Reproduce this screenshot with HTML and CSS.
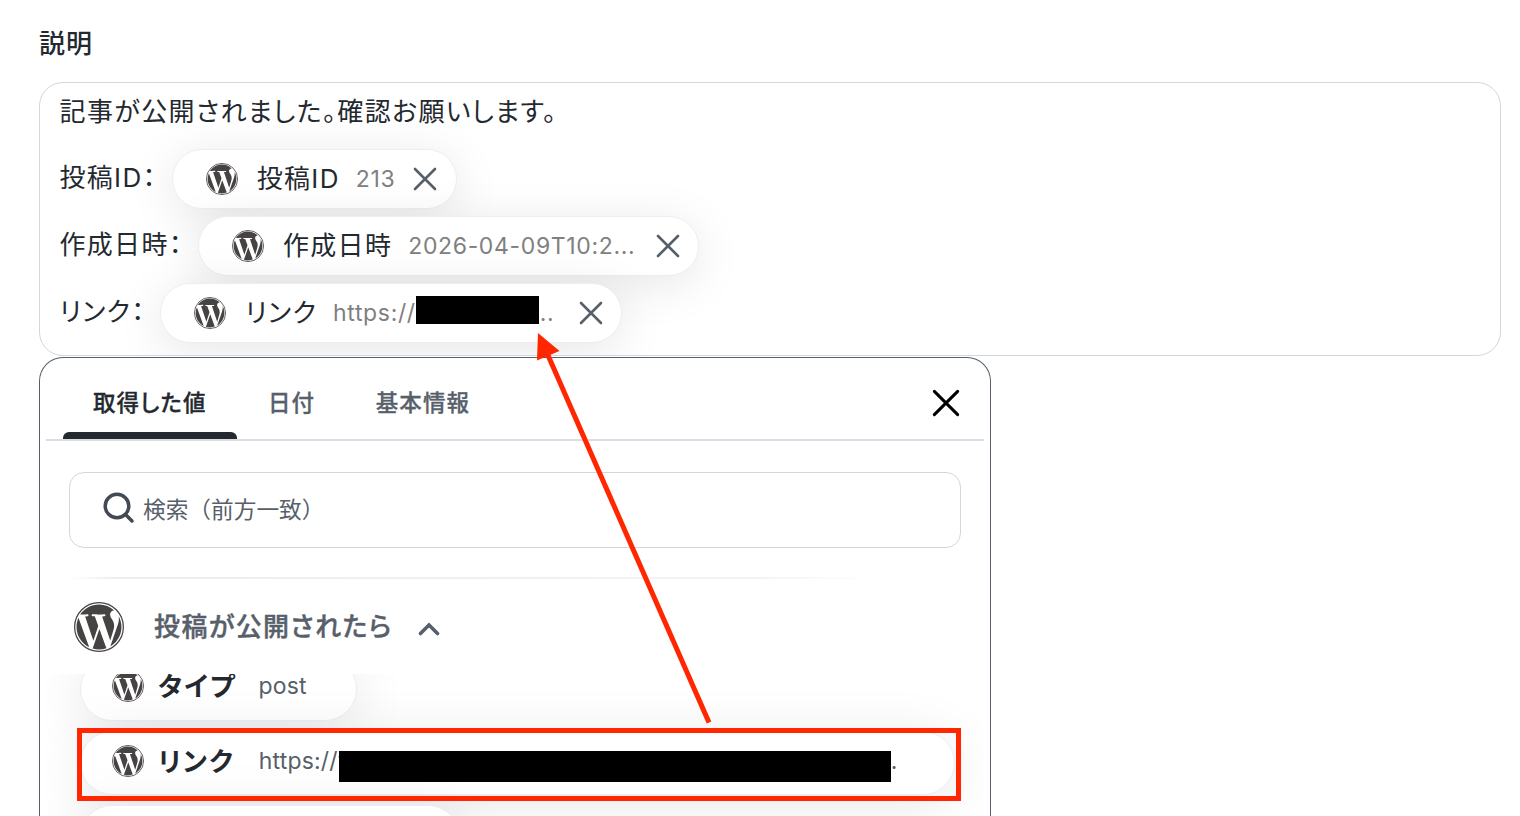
FILE: index.html
```html
<!DOCTYPE html>
<html lang="ja">
<head>
    <meta charset="UTF-8">
    <meta name="viewport" content="width=device-width, initial-scale=1.0">
    <title>説明</title>
    <link rel="stylesheet" href="styles.css">
</head>
<body>
    <svg class="sprite" width="0" height="0">
        <symbol id="wp" viewBox="0 0 24 24">
            <circle cx="12" cy="12" r="11.7" fill="#fff" stroke="#464342" stroke-width=".6"/>
            <path fill="#464342" d="M21.469 6.825c.84 1.537 1.318 3.3 1.318 5.175 0 3.979-2.156 7.456-5.363 9.325l3.295-9.527c.615-1.54.82-2.771.82-3.864 0-.405-.026-.78-.07-1.11m-7.981.105c.647-.03 1.232-.105 1.232-.105.582-.075.514-.93-.067-.899 0 0-1.755.135-2.88.135-1.064 0-2.85-.15-2.85-.15-.585-.03-.661.855-.075.885 0 0 .54.061 1.125.09l1.68 4.605-2.37 7.08L5.354 6.9c.649-.03 1.234-.1 1.234-.1.585-.075.516-.93-.065-.896 0 0-1.746.138-2.874.138-.2 0-.438-.008-.69-.015C4.911 3.15 8.235 1.215 12 1.215c2.809 0 5.365 1.072 7.286 2.833-.046-.003-.091-.009-.141-.009-1.06 0-1.812.923-1.812 1.914 0 .89.513 1.643 1.06 2.531.411.72.89 1.643.89 2.977 0 .915-.354 1.994-.821 3.479l-1.075 3.585-3.9-11.61zM12 22.784c-1.059 0-2.081-.153-3.048-.437l3.237-9.406 3.315 9.087c.024.053.05.101.078.149-1.12.393-2.325.609-3.582.609M1.211 12c0-1.564.336-3.05.935-4.39L7.29 21.709C3.694 19.96 1.212 16.271 1.211 12"/>
        </symbol>
        <symbol id="close" viewBox="0 0 24 24">
            <path d="M2 2l20 20M22 2L2 22" fill="none" stroke="currentColor" stroke-width="2.6" stroke-linecap="round"/>
        </symbol>
    </svg>

    <h1 class="field-label">説明</h1>

    <div class="editor">
        <p class="line line-first">記事が公開されました。確認お願いします。</p>
        <div class="line">
            <span class="line-label">投稿ID：</span>
            <span class="chip chip-id">
                <svg class="chip-icon"><use href="#wp"/></svg>
                <span class="chip-name">投稿ID</span>
                <span class="chip-value">213</span>
                <svg class="chip-close"><use href="#close"/></svg>
            </span>
        </div>
        <div class="line">
            <span class="line-label">作成日時：</span>
            <span class="chip chip-date">
                <svg class="chip-icon"><use href="#wp"/></svg>
                <span class="chip-name">作成日時</span>
                <span class="chip-value">2026-04-09T10:2...</span>
                <svg class="chip-close"><use href="#close"/></svg>
            </span>
        </div>
        <div class="line">
            <span class="line-label">リンク：</span>
            <span class="chip chip-link">
                <svg class="chip-icon"><use href="#wp"/></svg>
                <span class="chip-name">リンク</span>
                <span class="chip-value">https://</span>
                <span class="mask"></span>
                <span class="chip-value chip-rest">..</span>
                <svg class="chip-close"><use href="#close"/></svg>
            </span>
        </div>
    </div>

    <div class="panel">
        <div class="tabs">
            <span class="tab active">取得した値</span>
            <span class="tab">日付</span>
            <span class="tab">基本情報</span>
            <svg class="panel-close"><use href="#close"/></svg>
        </div>

        <div class="search">
            <svg class="search-icon" viewBox="0 0 32 32">
                <circle cx="14" cy="14" r="11.8"/>
                <path d="M22.5 22.5L29 29"/>
            </svg>
            <span class="search-text">検索（前方一致）</span>
        </div>

        <div class="divider"></div>

        <div class="group">
            <svg class="group-icon"><use href="#wp"/></svg>
            <span class="group-name">投稿が公開されたら</span>
            <svg class="chevron" viewBox="0 0 22 14">
                <path d="M2.5 11.5L11 3l8.500 8.500"/>
            </svg>
        </div>

        <div class="values">
            <div class="value value-type">
                <svg class="chip-icon"><use href="#wp"/></svg>
                <span class="value-name">タイプ</span>
                <span class="value-text">post</span>
            </div>
            <div class="value value-link">
                <svg class="chip-icon"><use href="#wp"/></svg>
                <span class="value-name">リンク</span>
                <span class="value-text value-url">https://y</span>
                <span class="mask mask-wide"></span>
                <span class="value-text value-rest">.</span>
            </div>
            <div class="value value-next"></div>
        </div>
    </div>

    <!-- 注釈 -->
    <div class="highlight"></div>
    <svg class="arrow" viewBox="0 0 1520 816">
        <path d="M709 722.500L547 353" stroke="#ff2600" stroke-width="5"/>
        <path d="M538 333l21.500 18-22.500 9.500z" fill="#ff2600"/>
    </svg>
</body>
</html>
```
FILE: styles.css
```css
* {
    margin: 0;
    padding: 0;
    box-sizing: border-box;
}

body {
    position: relative;
    width: 1520px;
    height: 816px;
    padding: 24px 19px 0 39px;
    overflow: hidden;
    background: #fff;
    color: #24292f;
    font-family: Inter, "Noto Sans CJK JP", sans-serif;
}

svg {
    display: block;
    flex: none;
}

.sprite {
    position: absolute;
}

.field-label {
    height: 58px;
    font-size: 26px;
    font-weight: 500;
    line-height: 40px;
    letter-spacing: 1px;
}

.editor {
    height: 274px;
    padding: 0 20px 0 19.500px;
    border: 1px solid #d0d7de;
    border-radius: 24px;
    overflow: hidden;
}

.line {
    display: flex;
    align-items: center;
    height: 66.7px;
    font-size: 26px;
    letter-spacing: 1.3px;
    font-feature-settings: "palt";
    white-space: nowrap;
}

.line-first {
    height: 63px;
    padding-bottom: 10px;
    letter-spacing: 1.4px;
}

.line-label {
    padding-bottom: 7px;
}

.chip {
    display: flex;
    align-items: center;
    height: 60px;
    padding-left: 33px;
    border: 1px solid #eaeef2;
    border-radius: 30px;
    background: #fff;
    box-shadow: 0 8px 48px rgba(0, 0, 0, 0.1);
}

.chip-id {
    width: 285px;
    margin-left: 15px;
}

.chip-date {
    width: 501px;
    margin-left: 15px;
}

.chip-link {
    width: 462px;
    margin-left: 15px;
}

.chip-icon {
    width: 32px;
    height: 32px;
    margin-right: 1px;
}

.chip-name {
    margin-left: 18px;
    padding-bottom: 5px;
}

.chip-value {
    margin-left: 16px;
    color: #808080;
    font-size: 23px;
    letter-spacing: 0.65px;
}

.chip-close {
    width: 24px;
    height: 24px;
    margin: 0 18.500px 0 auto;
    color: #57606a;
}

.mask {
    width: 123px;
    height: 28px;
    margin-bottom: 6px;
    background: #000;
}

.chip-rest {
    margin-left: 1px;
}

.panel {
    position: relative;
    width: 952px;
    height: 459px;
    margin-top: 1px;
    padding: 0 6px;
    border: 1px solid #57606a;
    border-bottom: 0;
    border-radius: 24px 24px 0 0;
    background: #fff;
}

.tabs {
    display: flex;
    height: 83px;
    padding: 0 24.500px 0 17px;
    border-bottom: 2px solid #d8dee4;
    color: #57606a;
    font-size: 22.500px;
    font-weight: 500;
    line-height: 90px;
    letter-spacing: 1.1px;
    font-feature-settings: "palt";
    white-space: nowrap;
    -webkit-text-stroke: 0.3px currentColor;
}

.tab {
    padding: 0 29.500px 0 31px;
}

.tab.active {
    position: relative;
    width: 174px;
    padding-left: 30px;
    color: #24292f;
}

.tab.active::after {
    content: '';
    position: absolute;
    left: 0;
    bottom: 0;
    width: 100%;
    height: 7px;
    border-radius: 6px 6px 0 0;
    background: #24292f;
}

.panel-close {
    width: 28px;
    height: 28px;
    margin: 31px 0 0 auto;
    color: #000;
}

.search {
    display: flex;
    align-items: center;
    height: 76px;
    margin: 31px 23px 0;
    padding-left: 33px;
    border: 1px solid #d0d7de;
    border-radius: 15px;
    color: #57606a;
    font-size: 22.700px;
}

.search-icon {
    width: 32px;
    height: 32px;
    margin: 0 8px 5px 0;
    fill: none;
    stroke: #424a53;
    stroke-width: 3.5;
    stroke-linecap: round;
}

.search-text {
    padding-bottom: 4px;
}

.divider {
    height: 2px;
    margin: 29px 110px 0 24px;
    background: linear-gradient(90deg, #fff, #eaeef2 6%, #f0f0f0 50%, #f3f3f3 85%, #fff);
}

.group {
    display: flex;
    align-items: center;
    height: 95px;
    padding-left: 28px;
    color: #57606a;
    font-size: 26px;
    font-weight: 500;
    letter-spacing: 1.4px;
    font-feature-settings: "palt";
    -webkit-text-stroke: 0.4px currentColor;
}

.group-icon {
    width: 50px;
    height: 52px;
}

.group-name {
    margin-left: 30px;
    padding-bottom: 4px;
}

.chevron {
    width: 22px;
    height: 14px;
    margin: 5px 0 0 25px;
    fill: none;
    stroke: #57606a;
    stroke-width: 3.6;
    stroke-linecap: round;
}

.values {
    display: flex;
    flex-direction: column;
    align-items: flex-start;
    gap: 10px;
    height: 142px;
    padding-left: 34px;
    overflow: hidden;
}

.value {
    display: flex;
    flex: none;
    align-items: center;
    height: 64px;
    padding: 0 0 4px 31px;
    border: 1px solid #eaeef2;
    border-radius: 32px;
    background: #fff;
    box-shadow: 0 8px 56px rgba(0, 0, 0, 0.1);
}

.value-type {
    width: 277px;
    margin-top: -17px;
    padding-bottom: 6px;
}

.value-link {
    width: 875px;
}

.value-next {
    width: 380px;
}

.value-name {
    margin: 0 0 4px 13px;
    color: #24292f;
    font-size: 26.500px;
    font-weight: 700;
    letter-spacing: 2px;
    font-feature-settings: "palt";
}

.value-text {
    margin-left: 22px;
    color: #57606a;
    font-size: 23px;
    letter-spacing: 0.2px;
}

.value-url {
    width: 80px;
    margin-left: 24px;
    overflow: hidden;
}

.mask-wide {
    width: 552px;
    height: 31px;
    margin: 10px 0 0;
}

.value-rest {
    margin-left: 0;
}

.highlight {
    position: absolute;
    left: 77px;
    top: 728px;
    width: 884px;
    height: 73px;
    border: 5px solid #ff2600;
}

.arrow {
    position: absolute;
    left: 0;
    top: 0;
    width: 1520px;
    height: 816px;
}
```
